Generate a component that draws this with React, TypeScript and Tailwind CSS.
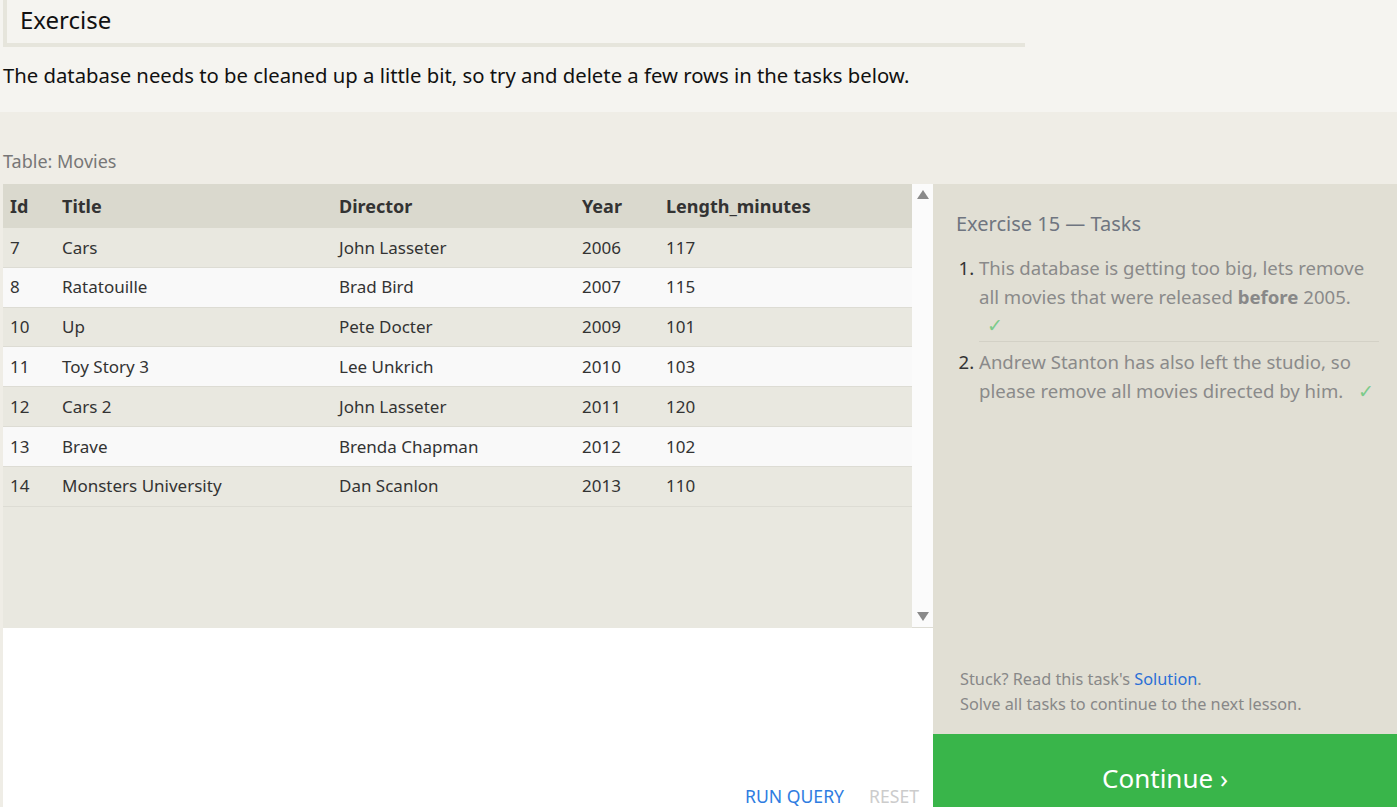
import React from 'react';

const movies = [
  { id: 7, title: 'Cars', director: 'John Lasseter', year: 2006, len: 117 },
  { id: 8, title: 'Ratatouille', director: 'Brad Bird', year: 2007, len: 115 },
  { id: 10, title: 'Up', director: 'Pete Docter', year: 2009, len: 101 },
  { id: 11, title: 'Toy Story 3', director: 'Lee Unkrich', year: 2010, len: 103 },
  { id: 12, title: 'Cars 2', director: 'John Lasseter', year: 2011, len: 120 },
  { id: 13, title: 'Brave', director: 'Brenda Chapman', year: 2012, len: 102 },
  { id: 14, title: 'Monsters University', director: 'Dan Scanlon', year: 2013, len: 110 },
];

export default function App() {
  return (
    <div className="w-[1397px] h-[807px] overflow-hidden bg-[#f5f4f0] text-[#111] font-['Noto_Sans',sans-serif]">
      {/* Header */}
      <div className="pl-[3px] pr-[372px]">
        <div className="h-[47px] border-l-4 border-b-4 border-[#e6e5dc] pl-[13px] flex items-center text-[24px] pb-[3px]">
          Exercise
        </div>
      </div>
      <p className="px-[3px] h-[65px] flex items-center text-[20.3px] pb-[8px]">
        The database needs to be cleaned up a little bit, so try and delete a few rows in the tasks below.
      </p>

      {/* Exercise area */}
      <div className="bg-[#efede6] h-[695px] pl-[3px]">
        <div className="h-[72px] flex items-end pb-[9px] text-[18px] text-[#777]">Table: Movies</div>
        <div className="flex h-[623px]">
          {/* Left: table + editor */}
          <div className="w-[930px] flex flex-col">
            <div className="flex h-[444px]">
              <div className="w-[909px] bg-[#e9e8e0]">
                <div className="grid grid-cols-[52px_277px_243px_84px_1fr] h-[44px] items-center bg-[#dad9ce] text-[18px] font-bold text-[#333] pl-[7px] pt-[1px]">
                  <div>Id</div>
                  <div>Title</div>
                  <div>Director</div>
                  <div>Year</div>
                  <div>Length_minutes</div>
                </div>
                {movies.map((m, i) => (
                  <div
                    key={m.id}
                    className={
                      'grid grid-cols-[52px_277px_243px_84px_1fr] h-[39.8px] items-center text-[17px] text-[#333] pl-[7px] border-b border-[#dddcd4] ' +
                      (i % 2 === 0 ? 'bg-[#e9e8e0]' : 'bg-[#f9f9f9]')
                    }
                  >
                    <div>{m.id}</div>
                    <div>{m.title}</div>
                    <div>{m.director}</div>
                    <div>{m.year}</div>
                    <div>{m.len}</div>
                  </div>
                ))}
              </div>
              <div className="w-[21px] bg-[#fbfbfb] flex flex-col justify-between items-center py-[6px] border-b border-[#dddcd4]">
                <svg width="12" height="9" viewBox="0 0 12 9"><path d="M6 0 L12 9 L0 9 Z" fill="#8a8a8a" /></svg>
                <svg width="12" height="9" viewBox="0 0 12 9"><path d="M0 0 L12 0 L6 9 Z" fill="#8a8a8a" /></svg>
              </div>
            </div>
            <div className="flex-1 bg-white flex items-end justify-end pr-[14px] pb-[1px] gap-[25px] text-[17.6px] leading-[20px]">
              <span className="text-[#2f7de1]">RUN QUERY</span>
              <span className="text-[#cccccc]">RESET</span>
            </div>
          </div>

          {/* Right: tasks */}
          <div className="flex-1 flex flex-col bg-[#e1dfd4]">
            <div className="flex-1 flex flex-col pl-[23px] pr-[18px] pt-[25px]">
              <h3 className="text-[20px] text-[#6f7580]">Exercise 15 — Tasks</h3>
              <ol className="mt-[14px] text-[18.6px] leading-[29px] text-[#8a8a8a] pl-[23px] list-decimal marker:text-[#333]">
                <li className="pb-[2px] border-b border-[#d3d1c6] pr-[4px]">
                  This database is getting too big, lets remove all movies that were released <b className="text-[#888]">before</b> 2005.
                  <div className="pl-[8px] -mt-[1px] text-[#7ccb8a]">✓</div>
                </li>
                <li className="pt-[5px]">
                  Andrew Stanton has also left the studio, so please remove all movies directed by{' '}
                  <span className="whitespace-nowrap">
                    him.<span className="ml-[15px] text-[#7ccb8a]">✓</span>
                  </span>
                </li>
              </ol>
              <div className="mt-auto pb-[17px] text-[16.3px] leading-[25px] text-[#888] pl-[4px]">
                <div>
                  Stuck? Read this task's <span className="text-[#2a6fd6]">Solution</span>.
                </div>
                <div>Solve all tasks to continue to the next lesson.</div>
              </div>
            </div>
            <div className="h-[73px] bg-[#39b54a] text-white text-[26px] flex items-center justify-center pt-[16px]">
              Continue ›
            </div>
          </div>
        </div>
      </div>
    </div>
  );
}
